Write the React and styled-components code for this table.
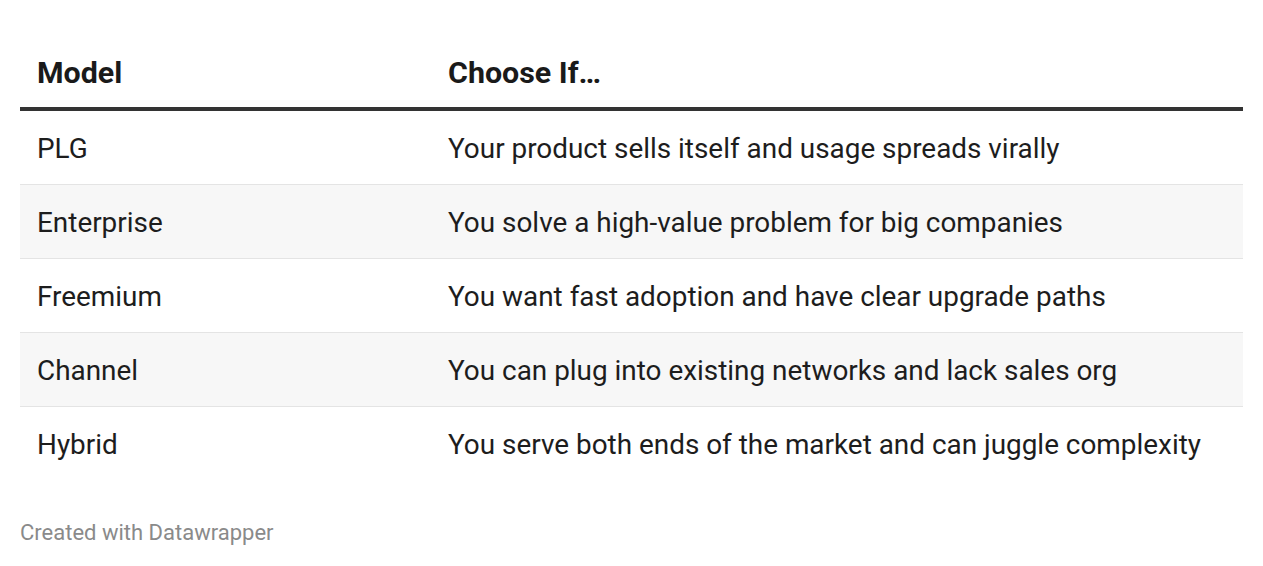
import React from "react";
import styled, { createGlobalStyle } from "styled-components";

const Global = createGlobalStyle`
  html, body { margin: 0; padding: 0; background: #ffffff; }
  body { font-family: Roboto, "Liberation Sans", sans-serif; color: #1d1d1d; }
`;

const Page = styled.div`
  padding: 40px 20px 0 20px;
  width: 1223px;
`;

const Table = styled.table`
  width: 100%;
  border-collapse: collapse;
  table-layout: fixed;
`;

const Col = styled.col`
  width: ${(p) => p.$w}px;
`;

const HeadCell = styled.th`
  text-align: left;
  font-weight: 700;
  font-size: 30.4px;
  line-height: 34px;
  padding: 16px 17px 17px 17px;
  border-bottom: 4px solid #333333;
  color: #1a1a1a;
`;

const Row = styled.tr`
  background: ${(p) => (p.$striped ? "#f7f7f7" : "#ffffff")};
  border-bottom: ${(p) => (p.$last ? "none" : "1px solid #e4e4e4")};
`;

const Cell = styled.td`
  font-size: 27.9px;
  line-height: 32px;
  padding: 22px 17px 19px 17px;
  color: #1d1d1d;
  white-space: nowrap;
`;

const Footer = styled.div`
  margin-top: 40px;
  font-size: 22px;
  color: #8a8a8a;
  line-height: 26px;
`;

const rows = [
  ["PLG", "Your product sells itself and usage spreads virally"],
  ["Enterprise", "You solve a high-value problem for big companies"],
  ["Freemium", "You want fast adoption and have clear upgrade paths"],
  ["Channel", "You can plug into existing networks and lack sales org"],
  ["Hybrid", "You serve both ends of the market and can juggle complexity"],
];

export default function App() {
  return (
    <Page>
      <Global />
      <Table>
        <colgroup>
          <Col $w={411} />
          <Col $w={812} />
        </colgroup>
        <thead>
          <tr>
            <HeadCell>Model</HeadCell>
            <HeadCell>Choose If…</HeadCell>
          </tr>
        </thead>
        <tbody>
          {rows.map(([m, c], i) => (
            <Row key={m} $striped={i % 2 === 1} $last={i === rows.length - 1}>
              <Cell>{m}</Cell>
              <Cell>{c}</Cell>
            </Row>
          ))}
        </tbody>
      </Table>
      <Footer>Created with Datawrapper</Footer>
    </Page>
  );
}
